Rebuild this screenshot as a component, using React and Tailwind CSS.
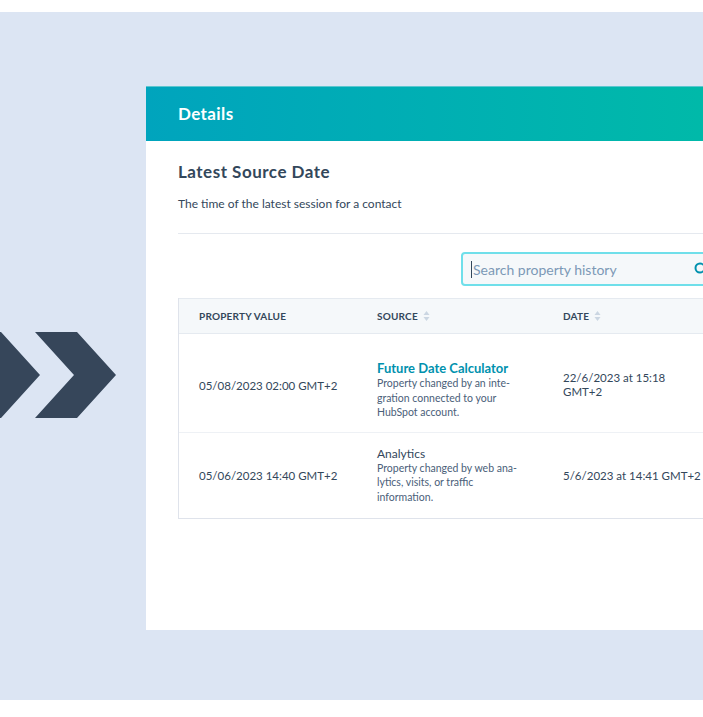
import React from 'react';

const font = { fontFamily: '"Lato", "Liberation Sans", sans-serif' };

const SortIcon = () => (
  <svg width="7" height="12" viewBox="0 0 7 12" className="ml-[5px]">
    <path d="M3.5 1 L6.5 5 L0.5 5 Z" fill="#cbd6e2" />
    <path d="M3.5 11 L6.5 7 L0.5 7 Z" fill="#cbd6e2" />
  </svg>
);

const Chevrons = () => (
  <svg width="146" height="86" viewBox="0 0 146 86" className="block">
    <path d="M-41 0 L1 0 L40 43 L1 86 L-41 86 L-2 43 Z" fill="#36465a" />
    <path d="M35 0 L77 0 L116 43 L77 86 L35 86 L74 43 Z" fill="#36465a" />
  </svg>
);

const App = () => {
  return (
    <div className="w-[703px] h-[717px] bg-white pt-[12px] overflow-hidden" style={font}>
      <div className="h-[688px] bg-[#dce5f3] flex items-start overflow-hidden">
        {/* Arrows */}
        <div className="w-[146px] shrink-0 pt-[320px]">
          <Chevrons />
        </div>

        {/* Card */}
        <div className="mt-[74px] h-[544px] w-[606px] shrink-0 bg-white">
          <div className="h-[55px] bg-gradient-to-r from-[#00a4bd] to-[#00bba7] border-t border-[#5cc6cf] flex items-center px-[32px]">
            <span className="text-white text-[17px] font-bold tracking-[0.4px]">Details</span>
          </div>

          <div className="px-[32px]">
            <h2 className="pt-[20px] text-[17px] leading-[22px] font-bold tracking-[0.5px] text-[#33475b]">Latest Source Date</h2>
            <p className="mt-[13px] text-[12px] leading-[16px] text-[#33475b]">The time of the latest session for a contact</p>
            <div className="mt-[21px] border-t border-[#e5e9ef]" />

            <div className="mt-[18px] flex justify-end">
              <div className="w-[259px] h-[34px] bg-[#f5f8fa] border-2 border-[#6fdfea] rounded-[4px] flex items-center pl-[8px] pr-[10px]">
                <span className="w-px h-[17px] bg-[#33475b] mr-[1px]" />
                <span className="flex-1 text-[14px] text-[#7c98b6]">Search property history</span>
                <svg width="14" height="14" viewBox="0 0 14 14" className="shrink-0">
                  <circle cx="6" cy="6" r="4.5" fill="none" stroke="#0091ae" strokeWidth="2" />
                  <path d="M9.5 9.5 L13 13" stroke="#0091ae" strokeWidth="2" strokeLinecap="round" />
                </svg>
              </div>
            </div>

            {/* Table */}
            <div className="mt-[12px] border-l border-b border-[#dfe3eb] text-[#33475b]">
              <div className="grid grid-cols-[178px_186px_1fr] h-[36px] bg-[#f5f8fa] border-t border-b border-[#e5eaf0] items-center text-[10px] font-bold tracking-[0.2px]">
                <div className="pl-[20px]">PROPERTY VALUE</div>
                <div className="pl-[20px] flex items-center">SOURCE<SortIcon /></div>
                <div className="pl-[20px] flex items-center">DATE<SortIcon /></div>
              </div>

              <div className="grid grid-cols-[178px_186px_1fr] h-[99px] pt-[6px] items-center border-b border-[#eef1f5]">
                <div className="pl-[20px] text-[11.5px]">05/08/2023 02:00 GMT+2</div>
                <div className="pl-[20px] pt-[8px]">
                  <div className="text-[13px] leading-[16px] font-bold text-[#0091ae]">Future Date Calculator</div>
                  <div className="text-[10.5px] leading-[14.5px] text-[#4a6079]">
                    Property changed by an inte-<br />gration connected to your<br />HubSpot account.
                  </div>
                </div>
                <div className="pl-[20px] text-[11.5px] leading-[14px] pb-[2px]">
                  22/6/2023 at 15:18<br />GMT+2
                </div>
              </div>

              <div className="grid grid-cols-[178px_186px_1fr] h-[85px] items-center">
                <div className="pl-[20px] text-[11.5px]">05/06/2023 14:40 GMT+2</div>
                <div className="pl-[20px]">
                  <div className="text-[12px] leading-[14px]">Analytics</div>
                  <div className="text-[10.5px] leading-[14.5px] text-[#4a6079]">
                    Property changed by web ana-<br />lytics, visits, or traffic<br />information.
                  </div>
                </div>
                <div className="pl-[20px] text-[11.5px] whitespace-nowrap">5/6/2023 at 14:41 GMT+2</div>
              </div>
            </div>
          </div>
        </div>
      </div>
    </div>
  );
};

export default App;
